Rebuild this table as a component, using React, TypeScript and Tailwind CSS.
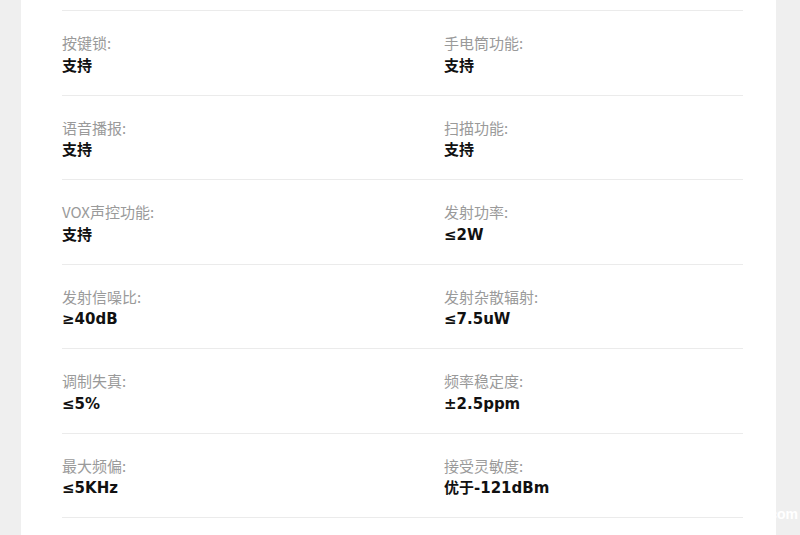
import React from 'react';

interface Spec {
  label: string;
  value: string;
}

const rows: [Spec, Spec][] = [
  [
    { label: '按键锁:', value: '支持' },
    { label: '手电筒功能:', value: '支持' },
  ],
  [
    { label: '语音播报:', value: '支持' },
    { label: '扫描功能:', value: '支持' },
  ],
  [
    { label: 'VOX声控功能:', value: '支持' },
    { label: '发射功率:', value: '≤2W' },
  ],
  [
    { label: '发射信噪比:', value: '≥40dB' },
    { label: '发射杂散辐射:', value: '≤7.5uW' },
  ],
  [
    { label: '调制失真:', value: '≤5%' },
    { label: '频率稳定度:', value: '±2.5ppm' },
  ],
  [
    { label: '最大频偏:', value: '≤5KHz' },
    { label: '接受灵敏度:', value: '优于-121dBm' },
  ],
];

function SpecCell({ spec }: { spec: Spec }) {
  return (
    <div className="flex flex-col">
      <p className="text-[15px] leading-[22.5px] text-[#9a9a9a] font-['Noto_Sans_CJK_SC',sans-serif]">
        {spec.label}
      </p>
      <p className="text-[15px] leading-[22.5px] font-bold text-[#111] font-['DejaVu_Sans','Noto_Sans_CJK_SC',sans-serif]">
        {spec.value}
      </p>
    </div>
  );
}

export default function App() {
  return (
    <div className="relative h-[535px] w-[800px] overflow-hidden bg-[#efefef] pl-[21px] pr-[24px]">
      <div className="h-full bg-white pl-[41px] pr-[33px] pt-[10px]">
        <div className="border-t border-[#ebebeb]">
          {rows.map((pair, i) => (
            <div
              key={i}
              className="grid h-[84.5px] grid-cols-[382px_1fr] border-b border-[#ebebeb] pt-[21px]"
            >
              <SpecCell spec={pair[0]} />
              <SpecCell spec={pair[1]} />
            </div>
          ))}
        </div>
      </div>
      <span className="absolute bottom-[10px] right-[2px] text-[14px] font-bold text-white font-['Liberation_Sans',sans-serif]">
        com
      </span>
    </div>
  );
}
